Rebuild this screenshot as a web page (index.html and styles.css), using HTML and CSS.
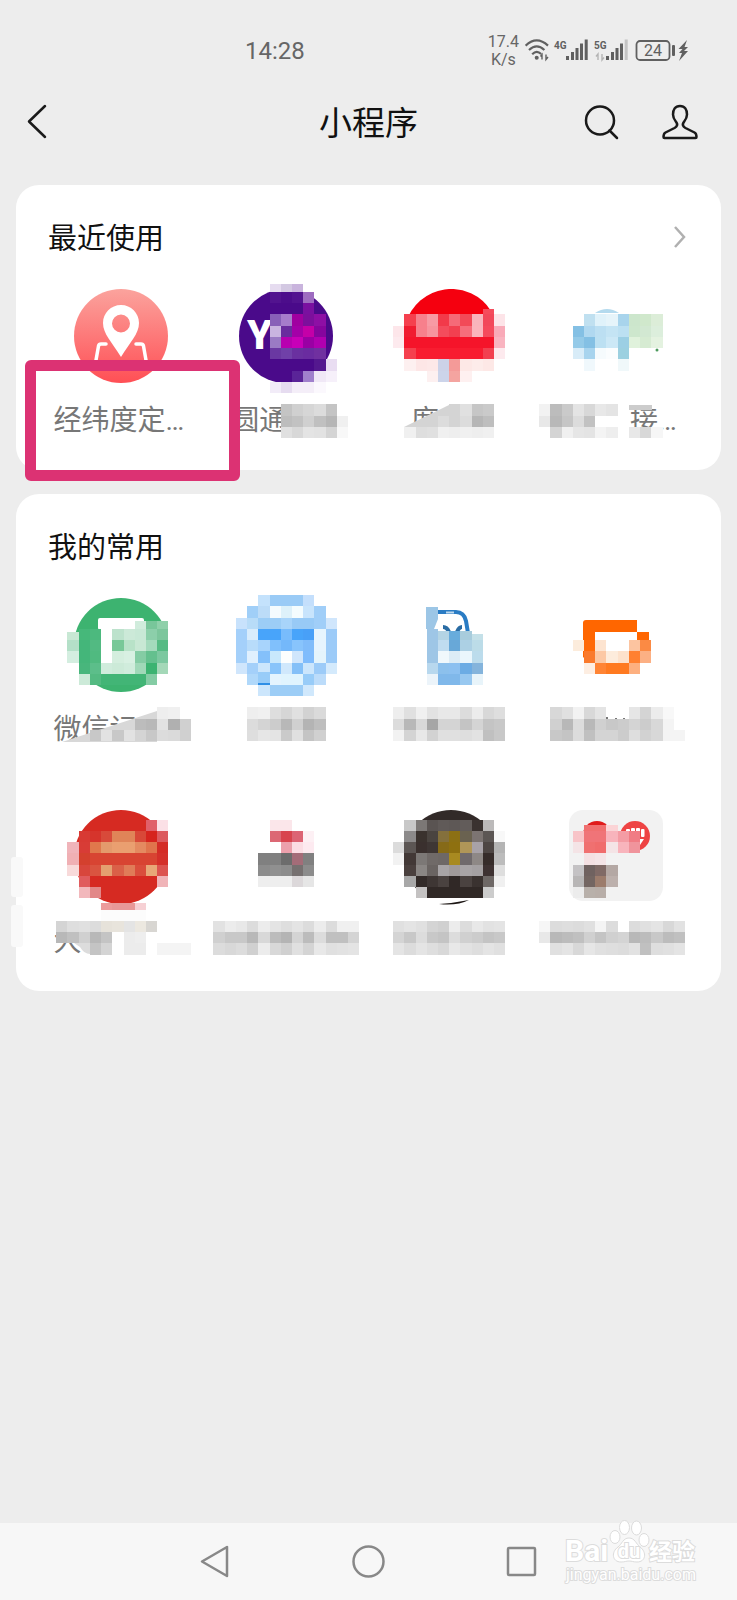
FILE: index.html
```html
<!DOCTYPE html>
<html lang="zh-CN">
<head>
  <meta charset="UTF-8" />
  <meta name="viewport" content="width=device-width, initial-scale=1.0"/>
  <title>小程序</title>
  <link rel="stylesheet" href="styles.css">
</head>
<body>
  <header class="status-bar">
    <span class="clock">14:28</span>
    <div class="status-right">
      <span class="net-speed">17.4<br>K/s</span>
      <svg class="status-icons" viewBox="0 0 170 30">
        <!-- wifi -->
        <g fill="none" stroke="#606060" stroke-width="2.2">
          <path d="M.6 9.6Q11.7-.8 23 9.6"/>
          <path d="M4 14Q11.7 6.600 19.400 14"/>
          <path d="M7.200 18.200Q11.700 13.600 16.200 18"/>
        </g>
        <circle cx="11.700" cy="21.700" r="2" fill="#606060"/>
        <path d="M17 23.500v-5l-1.500 2M21 18.500v5l2-2.500" fill="none" stroke="#606060" stroke-width="1.400"/>
        <!-- 4G -->
        <text class="net-type" x="29" y="13">4G</text>
        <g fill="#606060">
          <rect x="41" y="20" width="3" height="4"/>
          <rect x="46" y="16" width="3" height="8"/>
          <rect x="50.500" y="12" width="3" height="12"/>
          <rect x="55" y="7.500" width="3" height="16.500"/>
          <rect x="59.700" y="3.500" width="3" height="20.500"/>
        </g>
        <!-- 5G -->
        <text class="net-type" x="69" y="13">5G</text>
        <path d="M73 24v-6l-2 2.500M77 18v6l2-2.500" fill="none" stroke="#b4b4b4" stroke-width="1.400"/>
        <g fill="#606060">
          <rect x="81" y="20" width="3" height="4"/>
          <rect x="86" y="16" width="3" height="8"/>
          <rect x="90.500" y="12" width="3" height="12"/>
          <rect x="95" y="7.500" width="3" height="16.500"/>
          <rect x="99.700" y="3.500" width="3" height="20.500" fill="#c4c4c4"/>
        </g>
        <!-- battery -->
        <rect x="111.500" y="5" width="33" height="19" rx="3.500" fill="none" stroke="#606060" stroke-width="1.800"/>
        <text class="battery-level" x="128" y="20">24</text>
        <rect x="147" y="9" width="3" height="11" rx="1" fill="#606060"/>
        <path d="M162 4l-8.500 9h4l-3.500 4h3l-3 8 9-10h-4l4-4h-3.500z" fill="#606060"/>
      </svg>
    </div>
  </header>

  <nav class="title-bar">
    <button class="icon-btn back-btn" aria-label="返回">
      <svg viewBox="0 0 40 40"><path d="M25 4L9 19.500L25 35"/></svg>
    </button>
    <h1>小程序</h1>
    <div class="title-actions">
      <button class="icon-btn" aria-label="搜索">
        <svg viewBox="0 0 40 40"><circle cx="19" cy="18.500" r="14"/><path d="M28.500 28.500L36 36"/></svg>
      </button>
      <button class="icon-btn" aria-label="我">
        <svg viewBox="0 0 40 40"><path d="M21 4c-5 0-7 4-7 8.500c0 4 2 6 3.500 8c1.500 2.500.5 4-2 5.500l-9 4.500c-2 1-2 2-2 4.500q0 1 1 1h31q1 0 1-1c0-2.500 0-3.500-2-4.500l-9-4.500c-2.500-1.500-3.500-3-2-5.500c1.500-2 3.500-4 3.500-8c0-4.500-2-8.500-7-8.500z"/></svg>
      </button>
    </div>
  </nav>

  <main class="content">
    <section class="card">
      <div class="card-head">
        <h2>最近使用</h2>
        <a class="more" href="#" aria-label="更多"><svg viewBox="0 0 14 24"><path d="M2 2l9 10l-9 10"/></svg></a>
      </div>
      <ul class="app-grid">
        <li>
          <a class="app app-marked" href="#">
            <svg class="app-icon" viewBox="0 0 94 94">
              <defs>
                <linearGradient id="pin-bg" x1="0" y1="0" x2="0" y2="1">
                  <stop offset="0" stop-color="#fba39d"/>
                  <stop offset="1" stop-color="#ff4f55"/>
                </linearGradient>
              </defs>
              <circle cx="47" cy="47" r="47" fill="url(#pin-bg)"/>
              <path d="M47 16c-10 0-18 8-18 18c0 11 9 19 18 34c9-15 18-23 18-34c0-10-8-18-18-18zm0 9.500a9 9 0 1 1 0 18a9 9 0 1 1 0-18z" fill="#fff" fill-rule="evenodd"/>
              <path d="M32 55h-5q-2 0-2.500 2L21.500 74M62 55h5q2 0 2.500 2L72.500 74" fill="none" stroke="#fff" stroke-width="3.500" stroke-linecap="round"/>
            </svg>
            <span class="app-name chars-5">经纬度定…</span>
          </a>
        </li>
        <li>
          <a class="app" href="#">
            <svg class="app-icon" viewBox="0 0 94 94">
              <circle cx="47" cy="47" r="47" fill="#4a0a8a"/>
              <text class="logo-text" x="8" y="60">YT</text>
              <path d="M78 29h7l-2 8z" fill="#f0c"/>
            </svg>
            <span class="app-name chars-4">圆通</span>
            <svg class="mosaic" data-app="express" viewBox="204 289 165 182"></svg>
          </a>
        </li>
        <li>
          <a class="app" href="#">
            <svg class="app-icon" viewBox="0 0 94 94">
              <path d="M2 34a47 47 0 0 1 85-12l-10 8z" fill="#f5000f"/>
            </svg>
            <span class="app-name chars-3">度</span>
            <svg class="mosaic" data-app="finance" viewBox="369 289 165 182">
              <path d="M404 427l45-22v22z" fill="#d4d4d4"/>
            </svg>
          </a>
        </li>
        <li>
          <a class="app" href="#">
            <svg class="app-icon" viewBox="0 0 94 94">
              <path d="M26 24q12-8 24 0z" fill="#b4daee"/>
              <circle cx="88" cy="61" r="1.500" fill="#4c9a5c"/>
            </svg>
            <span class="app-name chars-5 name-end">接…</span>
            <svg class="mosaic" data-app="train" viewBox="533 289 165 182">
              <path d="M629 405h23v5h-23z" fill="#ccc"/>
              <path d="M596 422l20-6v8z" fill="#fff"/>
            </svg>
          </a>
        </li>
      </ul>
    </section>

    <section class="card card-frequent">
      <div class="card-head">
        <h2>我的常用</h2>
      </div>
      <ul class="app-grid">
        <li>
          <a class="app" href="#">
            <svg class="app-icon" viewBox="0 0 94 94">
              <circle cx="47" cy="47" r="47" fill="#3db370"/>
              <rect x="24" y="20" width="46" height="12" rx="2" fill="#fff"/>
              <rect x="26" y="26" width="40" height="46" fill="#fff"/>
            </svg>
            <span class="app-name chars-5">微信记</span>
            <svg class="mosaic" data-app="ledger" viewBox="39 598 165 182">
              <path d="M62 742l95-31v31z" fill="#d8d8d8"/>
            </svg>
          </a>
        </li>
        <li>
          <a class="app" href="#">
            <svg class="app-icon" viewBox="0 0 94 94"></svg>
            <span class="app-name"></span>
            <svg class="mosaic" data-app="robot" viewBox="204 598 165 182"></svg>
          </a>
        </li>
        <li>
          <a class="app" href="#">
            <svg class="app-icon" viewBox="0 0 94 94">
              <path d="M34 14h18q8 0 10 9l3 18" fill="none" stroke="#2a7cc4" stroke-width="4"/>
              <path d="M22 9h12v12l-4 10h-8z" fill="#9cc6e6"/>
              <path d="M39 29q4 0 6 5M58 29q-3 0-5 5" fill="none" stroke="#2a6ca4" stroke-width="4"/>
              <path d="M42 14.500h8" stroke="#bcd8ee" stroke-width="2"/>
            </svg>
            <span class="app-name"></span>
            <svg class="mosaic" data-app="phone" viewBox="369 598 165 182"></svg>
          </a>
        </li>
        <li>
          <a class="app" href="#">
            <svg class="app-icon" viewBox="0 0 94 94">
              <path d="M14 60V25q0-3 3-3h51v12h12v12h-12V34H26v12z" fill="#f60"/>
            </svg>
            <span class="app-name"></span>
            <svg class="mosaic" data-app="ride" viewBox="533 598 165 182">
              <path d="M607 717v3M616 718v2M624 718v2" stroke="#777" stroke-width="2"/>
            </svg>
          </a>
        </li>
        <li>
          <a class="app" href="#">
            <svg class="app-icon" viewBox="0 0 94 94">
              <circle cx="47" cy="47" r="47" fill="#d62a22"/>
            </svg>
            <span class="app-name chars-5">大</span>
            <svg class="mosaic" data-app="emblem" viewBox="39 810 165 182">
              <rect x="11" y="857" width="12" height="40" rx="3" fill="#f9f9f9"/>
              <rect x="11" y="905" width="12" height="42" rx="3" fill="#f9f9f9"/>
              <path d="M74 943l6 4q4 7 10 7V943z" fill="#dcdcdc"/>
            </svg>
          </a>
        </li>
        <li>
          <a class="app" href="#">
            <svg class="app-icon" viewBox="0 0 94 94"></svg>
            <span class="app-name"></span>
            <svg class="mosaic" data-app="gray" viewBox="204 810 165 182"></svg>
          </a>
        </li>
        <li>
          <a class="app" href="#">
            <svg class="app-icon" viewBox="0 0 94 94">
              <circle cx="47" cy="47" r="47" fill="#322a28"/>
            </svg>
            <span class="app-name"></span>
            <svg class="mosaic" data-app="dark" viewBox="369 810 165 182">
              <path d="M425 898h52v9h-52z" fill="#fff"/>
              <path d="M439 904q15-1 30-4q-12 6-30 4z" fill="#1c1614"/>
            </svg>
          </a>
        </li>
        <li>
          <a class="app" href="#">
            <svg class="app-icon" viewBox="0 0 94 94">
              <rect x="0" y="0" width="94" height="91" rx="14" fill="#f2f2f2"/>
              <circle cx="28" cy="25" r="14" fill="#e01c1c"/>
              <circle cx="66" cy="26" r="15" fill="#ee4444"/>
              <g fill="#fff">
                <rect x="57" y="19" width="4" height="8" rx="1"/>
                <rect x="62" y="18" width="4" height="9" rx="1"/>
                <rect x="67" y="18" width="4" height="9" rx="1"/>
                <rect x="72" y="19" width="3.500" height="8" rx="1"/>
                <path d="M67 29h8l-4 6h-6z"/>
              </g>
            </svg>
            <span class="app-name"></span>
            <svg class="mosaic" data-app="folder" viewBox="533 810 165 182"></svg>
          </a>
        </li>
      </ul>
    </section>
  </main>

  <footer class="nav-bar">
    <button class="nav-btn" aria-label="后退"><svg viewBox="0 0 34 34"><path d="M28 2v29L3 16.500z"/></svg></button>
    <button class="nav-btn" aria-label="主页"><svg viewBox="0 0 34 34"><circle cx="16.500" cy="16.500" r="15"/></svg></button>
    <button class="nav-btn" aria-label="任务"><svg viewBox="0 0 34 34"><rect x="3" y="3" width="27" height="27" rx="1"/></svg></button>
    <svg class="watermark" viewBox="0 0 140 68">
      <text class="wm-big" x="2" y="43">Bai</text>
      <g class="wm-paw">
        <ellipse cx="52" cy="19" rx="5" ry="6.500"/>
        <ellipse cx="61.500" cy="9.500" rx="5" ry="7"/>
        <ellipse cx="73.500" cy="10" rx="5" ry="7"/>
        <ellipse cx="81" cy="22" rx="5" ry="6.500"/>
        <path d="M66 20c-6 0-7 6-11 9c-7 5-6 15 3 15c4 0 5-1 8-1s4 1 8 1c9 0 10-10 3-15c-4-3-5-9-11-9z"/>
      </g>
      <text class="wm-du" x="66" y="40">du</text>
      <text class="wm-cn" x="86" y="42">经验</text>
      <text class="wm-url" x="3" y="62">jingyan.baidu.com</text>
    </svg>
  </footer>

  <script src="mosaic.js"></script>
</body>
</html>
```
FILE: styles.css
```css
* {
  box-sizing: border-box;
}
body {
  font-family: Roboto, 'Noto Sans CJK SC', sans-serif;
  margin: 0;
  min-height: 100vh;
  display: flex;
  flex-direction: column;
  background: #ededed;
  color: #111;
}
h1, h2 {
  margin: 0;
  font-weight: 400;
}
button {
  border: 0;
  padding: 0;
  background: none;
}
svg {
  display: block;
}

/* status bar */
.status-bar {
  height: 100px;
  padding: 2px 42px 0 245px;
  display: flex;
  align-items: center;
  justify-content: space-between;
  color: #666;
}
.clock {
  font-size: 24px;
}
.status-right {
  display: flex;
  align-items: center;
  gap: 6px;
}
.net-speed {
  font-size: 16px;
  line-height: 18px;
  text-align: center;
}
.status-icons {
  width: 170px;
  height: 30px;
}
.net-type {
  font-size: 10px;
  font-weight: 700;
  fill: #606060;
}
.battery-level {
  font-size: 16px;
  fill: #606060;
  text-anchor: middle;
}

/* title bar */
.title-bar {
  height: 44px;
  padding: 0 38px 0 20px;
  display: grid;
  grid-template-columns: 1fr auto 1fr;
  align-items: center;
  margin-bottom: 41px;
}
.title-bar h1 {
  font-size: 33px;
  line-height: 40px;
  padding: 4px 0 0 18px;
}
.title-actions {
  display: flex;
  justify-content: flex-end;
  gap: 38px;
}
.icon-btn {
  width: 40px;
  height: 40px;
}
.icon-btn svg {
  width: 40px;
  height: 40px;
  fill: none;
  stroke: #1a1a1a;
  stroke-width: 2.5;
  stroke-linecap: round;
  stroke-linejoin: round;
}

/* cards */
.content {
  flex: 1;
  padding: 0 16px;
}
.card {
  background: #fff;
  border-radius: 23px;
  padding: 32px 23px 31px;
  margin-bottom: 24px;
}
.card-head {
  display: flex;
  align-items: center;
  justify-content: space-between;
  height: 40px;
  padding: 0 11px 0 9px;
  margin-bottom: 32px;
}
.card-head h2 {
  font-size: 29px;
  line-height: 40px;
  padding-top: 4px;
}
.more svg {
  width: 14px;
  height: 24px;
  fill: none;
  stroke: #b0b0b0;
  stroke-width: 2.5;
}
.app-grid {
  list-style: none;
  margin: 0;
  padding: 0;
  display: grid;
  grid-template-columns: repeat(4, 1fr);
  row-gap: 62px;
}
.app {
  position: relative;
  display: flex;
  flex-direction: column;
  align-items: center;
  gap: 16px;
  color: #777;
  text-decoration: none;
}
.app-icon {
  width: 94px;
  height: 94px;
}
.app-name {
  height: 40px;
  font-size: 28px;
  line-height: 44px;
  white-space: nowrap;
}
.chars-3 {
  width: 80px;
}
.chars-4 {
  width: 110px;
}
.chars-5 {
  width: 136px;
}
.name-end {
  padding-right: 7px;
  text-align: right;
}
.logo-text {
  font-size: 40px;
  font-weight: 900;
  fill: #fff;
}
.mosaic {
  position: absolute;
  top: 0;
  left: 0;
  width: 165px;
  height: 182px;
  overflow: visible;
}

/* highlight frame around the first app name */
.app-marked::after {
  content: '';
  box-sizing: border-box;
  position: absolute;
  z-index: 2;
  left: -14px;
  top: 71px;
  width: 215px;
  height: 121px;
  border: 11px solid #dc3273;
  border-radius: 6px;
}

/* system navigation */
.nav-bar {
  position: relative;
  height: 77px;
  display: flex;
  align-items: center;
  justify-content: center;
  gap: 119px;
  background: #f7f7f7;
}
.nav-btn svg {
  width: 34px;
  height: 34px;
  fill: none;
  stroke: #888;
  stroke-width: 2.5;
  stroke-linejoin: round;
}
.watermark {
  position: absolute;
  right: 34px;
  bottom: 14px;
  width: 140px;
  height: 68px;
  fill: #fff;
  stroke: #dcdcdc;
  stroke-width: 1;
}
.watermark text {
  paint-order: stroke;
  stroke-width: 2;
}
.wm-big {
  font-size: 30px;
  font-weight: 700;
}
.wm-du {
  font-size: 20px;
  font-weight: 700;
  text-anchor: middle;
}
.wm-cn {
  font-size: 23px;
  font-weight: 700;
}
.wm-url {
  font-size: 16px;
}
```
FILE: mosaic.js
```js
// size of one mosaic block
const CELL = 11.23;

// Blocks: [first column, row, colours]. Two digits are a grey, "." leaves the block clear.
const MOSAICS = {
  express: [
    [24, 25.3, 'e6dcf0 d3c8e2 c9b4dd'],
    [24, 26, '52138f 4c0d8b 52138f 9e6cc0'],
    [24, 27, '4a0a8a 4a0a8a 4a0a8a 7a10a0'],
    [24, 28, '8860b8 a67ccb a000a0 7c0f9c 8e0fa5'],
    [24, 29, 'c9b4e0 6a2c9e a400a8 c400a8 86059e'],
    [24, 30, '9a7ac4 b800b0 c800b8 9a00a4 b000b0'],
    [24, 31, '6a38a2 7040a8 6a30a0 6a2ca0 7030a0'],
    [28, 32, '54188f e9ddf2'],
    [26, 33, '5a2498 a080cc f0e8f6 f6f0fa'],
    [24, 34, 'f2ecf8 e6dcf0 f4eef8 f4eef8 fbf8fd'],
    [25, 36, 'c4 d0 d6 dc c4'],
    [25, 37, 'bd c2 d0 c0 b6 f0'],
    [25, 38, 'e0 d8 e4 e2 d4 f8']
  ],
  finance: [
    [43, 27.5, 'f54c5c'],
    [36, 28, 'f5404e f7808c f79aa4 f23a4a f56a78 f24a58 f9b4bc f2485a fde4e8'],
    [35, 29, 'fde6ea f01c30 f7808c f7949e f44c5c f24050 f66e7c fbb4bc f54a5c f9aab8'],
    [35, 30, 'fdeaee f5142a f5142a f5142a f5142a f5142a f5142a f5142a f5142a f9b4c0'],
    [36, 31, 'f5404e f81c30 f81c30 f81c30 f81c30 f81c30 f81c30 f24050 fdeaee'],
    [36, 32, 'fdf0f0 fde6e6 fde8e8 ccd2e8 f49a98 fde8e6 fdecea fde8e6'],
    [38, 33, 'fdf0f0 ccd4ea f4a4a0 fef0f0'],
    [40, 36, 'd4 e0 c6 ca'],
    [39, 37, 'dc d4 dc b6 be'],
    [36, 38, 'f0 de e0 f0 ee f0 ee f0']
  ],
  train: [
    [52, 28, 'c0e0f0 e0f2fa e6f4fa a8d4ec cce6cc d0e8cc dcedd8'],
    [51, 29, '84c0e4 b0d8f0 bcdff2 c4e4f4 bce0f2 cde7cd d2e8d2 dceedc'],
    [51, 30, '94cae8 84c0e4 bce0f2 cce8f6 9ccfe4 e0f2dc d6ebd2 e4f2e0'],
    [51, 31, 'd8ecf8 a8d4ee f6fbfd fbfdfe 9cd0e0'],
    [52, 32, 'f0f8fc . . f0f8fa'],
    [48, 36, 'f2 bc ca e4 d8 e8 e4'],
    [48, 37, 'e8 b8 c6 dc c2 . .'],
    [49, 38, 'd4 f0 e6 e4 f4 ee . e8 d8 f6']
  ],
  ledger: [
    [12, 55.3, 'd0ecdc 78c69a 8fd0aa'],
    [6, 56.3, 'c8e8d4'],
    [7, 56, '46b87a 4cb97e . bce2cc cce9d8 c8e8d6 8ccfaa 7cc69c'],
    [6, 57, 'b4e0c8 44b67a 52ba82 . 78c898 b8e2c8 c8e8d4 a4dabc 56bb84'],
    [6, 58, 'd4eee0 44b67a 50ba80 . d4eede d8f0e2 84cca4 64c08e 7cc8a0'],
    [6, 59, 'ff 48b67c 5cbe8a d0ecdc ccead8 d0ecdc a0d8b8 3cb371 a4d8b8'],
    [7, 60, 'ccead8 54ba82 42b576 42b576 42b576 42b576 84cca4 ff'],
    [14, 63, 'ee f0'],
    [12, 64, 'bc b8 e2 b0 d0'],
    [8, 65, 'c8 e2 c8 e2 d4 c8 dc da d0']
  ],
  robot: [
    [23, 53, 'c4e2fc 9acbf6 9acbf6 9acbf6 c4dffc'],
    [22, 54, 'a0cff8 bcdcf8 f4fbfe ddf1fa f4fcfe c8e4fc a0cef8'],
    [21, 55, 'c8e2fc b8dcf8 9ccdf6 9ccdf6 a8d4fa 98caf6 98caf6 a0cef8 d0e6fc'],
    [21, 56, 'a4d0fa d8ecfc 48a4fa 48a4fa 78bcfc 48a4fa 48a0f8 e6f5fe 9ccbf8'],
    [21, 57, 'a4d0fa b8dcfa a8d4fc 80c0fc 74b8fa 88c4fc 80bcfa e6f4fe 9ccbf8'],
    [21, 58, 'a4d0fa e0f0fe 84c0fa c8e8fc fcfefe d0e6fc 80bcfc e4f4fc 9ccbf8'],
    [21, 59, 'd0e6fc a4d0fa cce6fc 88c4fa d0e8fc 84c0f8 cce6fc 9ccbf8 d4eafc'],
    [22, 60, 'b0d8fa 2f8fe6 e4f4fe e0f4fe e0f4fe 98ccf8 bcdcfa'],
    [23, 59.8, '98ccf8'],
    [23, 61, 'cce6fc 9ccdf6 9ccdf6 9ccdf6 d0e8fc'],
    [22, 63, 'ee f0 de d6 e0 d2 da'],
    [22, 64, 'dc d4 cc b8 d0 b4 be'],
    [22, 65, 'de e6 e4 ca e0 c4 d0']
  ],
  phone: [
    [38, 56, '9ec6e6'],
    [39, 56.2, 'b4d4e4 68acdc a8ccdc'],
    [42, 56.5, 'c4e0e8'],
    [38, 57, '9ec6e6 c0dcf0 68a8d8 acd0e4 bcdce8'],
    [38, 58, '9ec6e6 f0f8fc dcecf6 eaf6fc bcdcec'],
    [38, 59, 'b8d8ee 8cc0ec 8cc0f0 6cace4 84b4dc'],
    [38, 60, 'ecf4fa 80b8ea 80b8ea 98c8f0 e8f4fa'],
    [35, 63, 'ee e0 f0 e2 e8 e8 dc ec d8 de'],
    [35, 64, 'dc b8 d8 a6 d4 d4 c4 d4 c4 c8'],
    [35, 65, 'f2 d4 e8 d2 e0 e0 de e2 c0 c8']
  ],
  ride: [
    [51, 57, 'fcecdc ff6a08 fde4d0 ff ff fcc4a0 fb8a44'],
    [52, 58, 'fa7a2c fcc8a4 fdecdc fde2cc ff8030 fcb084'],
    [52, 59, 'fdeee2 ff8434 ff7a20 ff7a20 fdb080'],
    [49, 63, 'd8 e0 f2 d8 e4 . . e6 d4 ec f8'],
    [49, 64, 'd0 b8 dc b8 d0 c8 cc d4 cc d8 f4'],
    [49, 65, 'c8 c4 dc c0 d4 d4 cc de d2 d8 f4 f4']
  ],
  emblem: [
    [13, 73, 'e0606a fbe0e6'],
    [7, 74, 'd83a34 d6342c d84a3a e08458 e08458 d84838 d6241e dc5a5e'],
    [6, 75, 'f0b4ba d83c36 e0784c e49a6c ea9f70 ea9f70 e48a60 e0744c d42c26'],
    [6, 76, 'f0b0b4 d4402e d84432 d84432 d84432 d84432 d84432 d84432 d4302a'],
    [6, 77, 'f8dada d8463c da5440 e4a070 da6048 e07c58 da4e3c e8a878 dc5450'],
    [7, 78, 'e05c5e d62a22 d62a22 d62a22 d62a22 d62a22 d62a22 f0b4b8'],
    [7, 79, 'f2b8bc e28888'],
    [9, 80.4, 'ec9c9c e89898 e89898 f6d0d4'],
    [9, 81, 'fc fc fc fc'],
    [5, 82, 'd4 de e0 dc e6e2da e8e4dc e4 ece8e0 d8d6d2'],
    [5, 83, 'b8 c0 d0 b8 c4 . ec ee'],
    [8, 84, 'c4 d4 . ec ec . f4 f4 f4']
  ],
  gray: [
    [24, 73, 'fbe6ea fbe6ea'],
    [24, 74, 'dc6874 d8444e dc6474 fdf0f4'],
    [25, 75, 'eca0ac fbdde4 fdeaf0'],
    [23, 76, '80 80 6c a46c78 80'],
    [23, 77, '8c 90 8c 767070 8c'],
    [23, 78, 'ee ee ee dcd8da e6'],
    [19, 82, 'e2 ec e8 dc ec e4 de e4 dc ec dc f0 f0'],
    [19, 83, 'd0 c8 c8 b8 d8 bc b4 d4 bc dc c0 c0 d4'],
    [19, 84, 'dc d8 dc d0 ec d8 d0 e0 d4 e8 e0 e2 e4']
  ],
  dark: [
    [36, 73, 'c8 7c7876 5a5452 605a58 5e5856 625c5a 3a3230 bcbaba'],
    [36, 74, '8c8a8a 3a322e 4a4440 84703c 8c7014 6a6250 7c7472 5c5654 f8'],
    [35, 75, 'dc 5c5654 3a302e 3e3634 866a18 8e7010 b09658 a8a2a8 4e4644 b4'],
    [35, 76, 'f2 423836 7c7876 706a68 6e6866 a88a20 706a6c 8e8886 362c2a bc'],
    [36, 77, '4a403e 8a8684 6a6462 a8a4a6 a09a9a a8a4a6 a4a0a2 3e3232 de'],
    [36, 78, 'a8 322a28 3e3634 4a4240 302826 4a4240 3a3230 6e6866 f0'],
    [37, 79, 'c4c2c2 302826 302826 302826 302826 302826 cc'],
    [38, 81, 'ff ff ff ff'],
    [35, 82, 'e0 e4 e0 d4 d0 ec dc e8 e2 e4'],
    [35, 83, 'd4 c8 dc c8 c4 dc d0 cc c4 c8'],
    [35, 84, 'e4 dc e4 de d8 e8 e2 de e4 e0']
  ],
  folder: [
    [52, 73.5, 'f07070 f07070 fbd4d6'],
    [51, 74, 'f8c4c8 f07478 f07478 f8b4bc f49ca4 f07c84'],
    [51, 75, 'f4e4e6 f07070 f06c6c f4e4e6 f8b4bc f0949c'],
    [52, 76, 'f4e0e2 f4e4e6'],
    [51, 77, 'c4c2c4 706260 806a66 b4a8a4'],
    [51, 78, 'b8b6b6 746662 9c7c6c bcb0ac'],
    [51, 79, 'ec b8b0aa b8aea8'],
    [48, 82, 'f6 dc de dc e0 f4 dc . dc e0 e4 d8 e2'],
    [48, 83, 'e8 b8 bc c0 d0 c4 d0 d4 b8 bc c8 bc c0'],
    [49, 84, 'e0 e4 d8 e6 e0 de dc e2 c0 de e0 e4']
  ]
};

function drawMosaic(svg) {
  MOSAICS[svg.dataset.app].forEach(([col, row, colours]) => {
    colours.split(' ').forEach((colour, i) => {
      if (colour === '.') return;
      const x = Math.round((col + i) * CELL);
      const y = Math.round(row * CELL);
      const rect = document.createElementNS('http://www.w3.org/2000/svg', 'rect');
      rect.setAttribute('x', x);
      rect.setAttribute('y', y);
      rect.setAttribute('width', Math.round((col + i + 1) * CELL) - x);
      rect.setAttribute('height', Math.round((row + 1) * CELL) - y);
      rect.setAttribute('fill', '#' + (colour.length === 2 ? colour.repeat(3) : colour));
      rect.setAttribute('shape-rendering', 'crispEdges');
      svg.appendChild(rect);
    });
  });
}

document.querySelectorAll('.mosaic').forEach(drawMosaic);
```
